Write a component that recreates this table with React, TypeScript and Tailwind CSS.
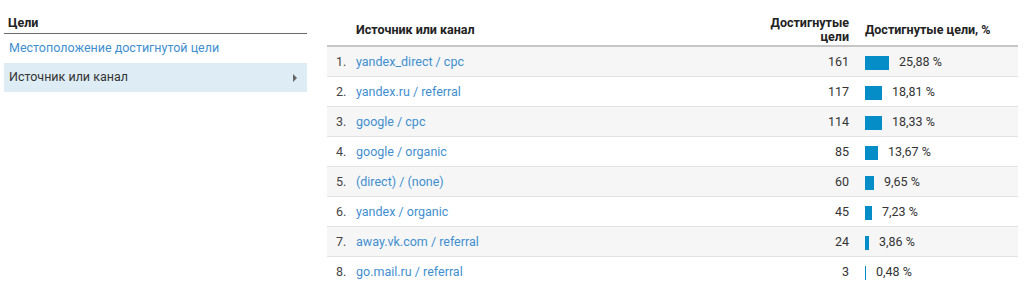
import React from "react";

type Row = { source: string; goals: number; pct: number };

const rows: Row[] = [
  { source: "yandex_direct / cpc", goals: 161, pct: 25.88 },
  { source: "yandex.ru / referral", goals: 117, pct: 18.81 },
  { source: "google / cpc", goals: 114, pct: 18.33 },
  { source: "google / organic", goals: 85, pct: 13.67 },
  { source: "(direct) / (none)", goals: 60, pct: 9.65 },
  { source: "yandex / organic", goals: 45, pct: 7.23 },
  { source: "away.vk.com / referral", goals: 24, pct: 3.86 },
  { source: "go.mail.ru / referral", goals: 3, pct: 0.48 },
];

function fmt(n: number) {
  return n.toFixed(2).replace(".", ",") + " %";
}

function Sidebar() {
  return (
    <div className="w-[303px] ml-[4px] pt-[15px]">
      <div className="h-[19px] border-b border-[#6b6b6b] pl-[4px] text-[12.5px] font-bold leading-[16px] text-[#222]">
        Цели
      </div>
      <div className="h-[29px] pl-[5px] pt-[6px] text-[12.5px] leading-[16px] text-[#3f8fcf]">
        Местоположение достигнутой цели
      </div>
      <div className="flex h-[29px] items-center justify-between bg-[#deedf5] pl-[5px] pr-[10px] text-[12.5px] text-[#333]">
        <span>Источник или канал</span>
        <span className="h-0 w-0 border-y-[4px] border-l-[4px] border-y-transparent border-l-[#666]" />
      </div>
    </div>
  );
}

function Table() {
  return (
    <div className="ml-[20px] w-[691px] pt-[15px]">
      <div className="flex h-[32px] items-center border-b-2 border-[#c6c6c6] text-[12.5px] font-bold leading-[14px] text-[#222]">
        <div className="w-[29px]" />
        <div className="flex-1">Источник или канал</div>
        <div className="w-[80px] text-right">
          Достигнутые
          <br />
          цели
        </div>
        <div className="w-[169px] pl-[16px]">Достигнутые цели, %</div>
      </div>
      {rows.map((r, i) => (
        <div
          key={r.source}
          className={
            "flex h-[30px] items-center border-b border-[#e2e2e2] pt-[2px] text-[12.5px] " +
            (i % 2 === 0 ? "bg-[#f6f6f6]" : "bg-white")
          }
        >
          <div className="w-[29px] pl-[9px] text-[#444]">{i + 1}.</div>
          <div className="flex-1 text-[#3f8fcf]">{r.source}</div>
          <div className="w-[80px] text-right text-[#333]">{r.goals}</div>
          <div className="flex w-[169px] items-center pl-[16px]">
            <div
              className="h-[14px] bg-[#058dc7]"
              style={{ width: Math.max(1, Math.round(r.pct * 0.93)) }}
            />
            <span className="ml-[10px] text-[#333]">{fmt(r.pct)}</span>
          </div>
        </div>
      ))}
    </div>
  );
}

export default function App() {
  return (
    <div className="flex h-[284px] w-[1024px] bg-white font-['Roboto','Liberation_Sans',sans-serif]">
      <Sidebar />
      <Table />
    </div>
  );
}
